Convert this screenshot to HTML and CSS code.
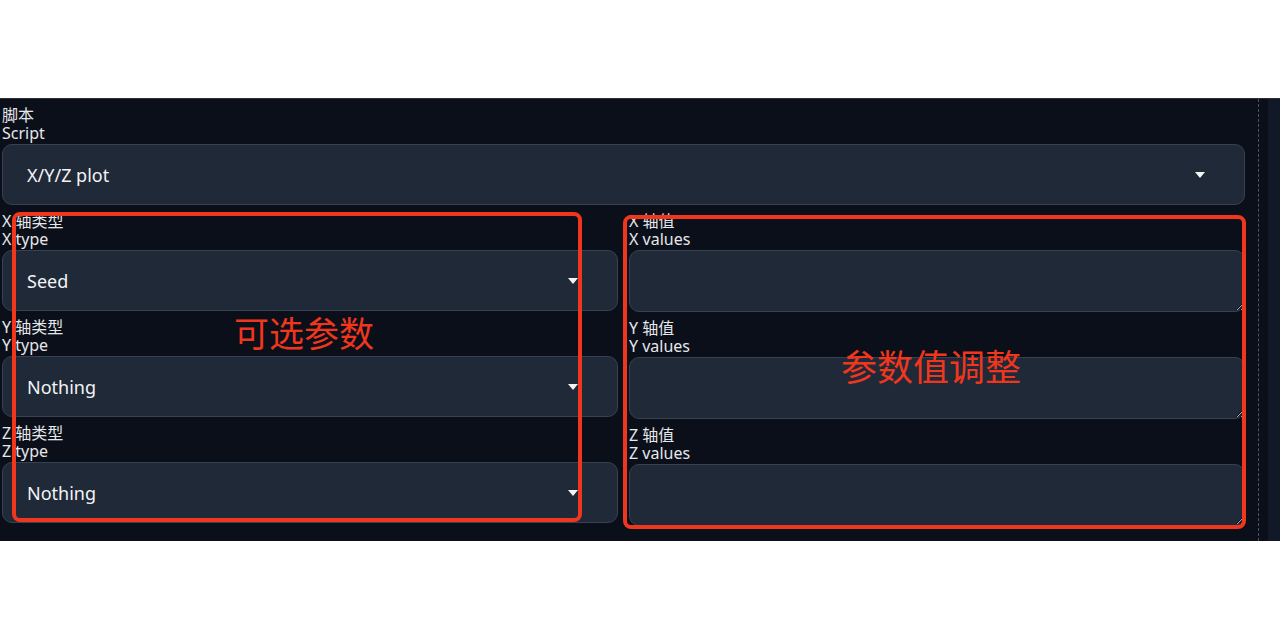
FILE: index.html
```html
<!DOCTYPE html>
<html lang="zh">
<head>
<meta charset="utf-8">
<title>X/Y/Z plot</title>
<link rel="stylesheet" href="styles.css">
</head>
<body>
<div class="page">
  <div class="app">
    <div class="main">
      <div class="field">
        <div class="label"><span>脚本</span><span>Script</span></div>
        <div class="select"><span class="value">X/Y/Z plot</span><span class="arrow"></span></div>
      </div>
      <div class="grid">
        <div class="col">
          <div class="field">
            <div class="label"><span>X 轴类型</span><span>X type</span></div>
            <div class="select"><span class="value">Seed</span><span class="arrow"></span></div>
          </div>
          <div class="field">
            <div class="label"><span>Y 轴类型</span><span>Y type</span></div>
            <div class="select"><span class="value">Nothing</span><span class="arrow"></span></div>
          </div>
          <div class="field">
            <div class="label"><span>Z 轴类型</span><span>Z type</span></div>
            <div class="select"><span class="value">Nothing</span><span class="arrow"></span></div>
          </div>
        </div>
        <div class="col">
          <div class="field">
            <div class="label"><span>X 轴值</span><span>X values</span></div>
            <textarea class="text"></textarea>
          </div>
          <div class="field">
            <div class="label"><span>Y 轴值</span><span>Y values</span></div>
            <textarea class="text"></textarea>
          </div>
          <div class="field">
            <div class="label"><span>Z 轴值</span><span>Z values</span></div>
            <textarea class="text"></textarea>
          </div>
        </div>
      </div>
    </div>
    <div class="divider"></div>
    <div class="strip"></div>

    <div class="mark mark-left"></div>
    <div class="mark mark-right"></div>
    <div class="note note-left">可选参数</div>
    <div class="note note-right">参数值调整</div>
  </div>
</div>
</body>
</html>
```

FILE: styles.css
```css
html, body {
  margin: 0;
  padding: 0;
  background: #ffffff;
}

body {
  font-family: "Noto Sans", "Noto Sans CJK SC", sans-serif;
  color: #e5e7eb;
}

.page {
  padding-top: 98px;
  height: 542px;
  box-sizing: border-box;
}

.app {
  position: relative;
  display: flex;
  background: #0b0f19;
  height: 443px;
  border-top: 1px solid #2a2f3a;
  box-sizing: border-box;
}

.main {
  width: 1258px;
  box-sizing: border-box;
  padding: 7px 13px 0 2px;
  display: flex;
  flex-direction: column;
  gap: 7px;
}

.divider {
  width: 10px;
  border-left: 1px dashed #4b5563;
  box-sizing: border-box;
}

.strip {
  flex: 1;
  background: #111827;
}

.grid {
  display: grid;
  grid-template-columns: 1fr 1fr;
  column-gap: 11px;
}

.col {
  display: flex;
  flex-direction: column;
  gap: 7px;
}

.field {
  display: flex;
  flex-direction: column;
}

.label {
  display: flex;
  flex-direction: column;
  font-size: 16px;
  line-height: 18px;
  color: #e5e7eb;
  margin-bottom: 2px;
  white-space: nowrap;
}

.select {
  height: 61px;
  box-sizing: border-box;
  background: #1f2937;
  border: 1px solid #374151;
  border-radius: 10px;
  display: flex;
  align-items: center;
  justify-content: space-between;
  padding: 0 39px 0 24px;
}

.value {
  font-size: 18px;
  color: #f3f4f6;
}

.arrow {
  width: 0;
  height: 0;
  border-left: 5.5px solid transparent;
  border-right: 5.5px solid transparent;
  border-top: 6px solid #f3f4f6;
}

.text {
  display: block;
  height: 62px;
  box-sizing: border-box;
  margin: 0;
  background: #1f2937;
  border: 1px solid #374151;
  border-radius: 10px;
  color: #f3f4f6;
  color-scheme: dark;
  resize: vertical;
  font-family: inherit;
  font-size: 16px;
  outline: none;
}

.mark {
  position: absolute;
  border: 4px solid #f0361d;
  border-radius: 8px;
  box-sizing: border-box;
}

.mark-left {
  left: 12px;
  top: 113px;
  width: 570px;
  height: 310px;
}

.mark-right {
  left: 623px;
  top: 116px;
  width: 623px;
  height: 314px;
}

.note {
  position: absolute;
  color: #f0361d;
  line-height: 1;
  white-space: nowrap;
  font-family: "Noto Sans CJK SC", sans-serif;
}

.note-left {
  left: 234px;
  top: 215px;
  font-size: 35px;
}

.note-right {
  left: 841px;
  top: 248px;
  font-size: 36px;
}
```
